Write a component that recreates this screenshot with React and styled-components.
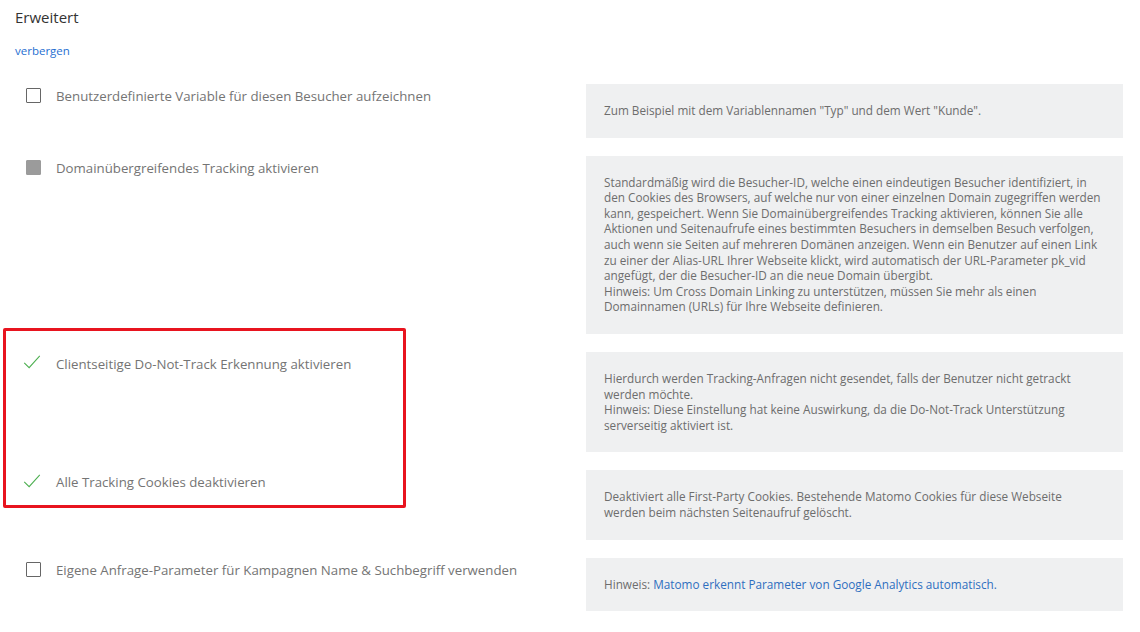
import React from "react";
import styled, { createGlobalStyle } from "styled-components";

const Global = createGlobalStyle`
  html, body { margin: 0; padding: 0; background: #fff; }
  body { font-family: "Open Sans", "Noto Sans", sans-serif; }
`;

const Page = styled.div`
  padding: 7px 17px 0 15px;
`;

const Title = styled.h3`
  margin: 0;
  font-size: 15px;
  line-height: 20px;
  font-weight: 400;
  color: #333;
`;

const ToggleLink = styled.a`
  display: inline-block;
  margin-top: 17px;
  font-size: 11.5px;
  line-height: 14px;
  color: #1f6fd1;
  text-decoration: none;
`;

const List = styled.div`
  margin-top: 24px;
`;

const Row = styled.div`
  display: grid;
  grid-template-columns: 1fr 537px;
  column-gap: 16px;
  margin-bottom: 18px;
`;

const Field = styled.label`
  display: flex;
  align-items: flex-start;
  gap: 15px;
  padding: 4px 0 0 11px;
`;

const Control = styled.span`
  flex: none;
  width: 15px;
  height: 15px;
  display: flex;
  align-items: center;
  justify-content: center;
`;

const Box = styled.span`
  box-sizing: border-box;
  width: 15px;
  height: 15px;
  border-radius: 1px;
  border: 1.5px solid ${(p) => (p.$filled ? "#9b9b9b" : "#666")};
  background: ${(p) => (p.$filled ? "#9b9b9b" : "#fff")};
`;

const LabelText = styled.span`
  font-size: 13.25px;
  line-height: 16px;
  color: #747474;
`;

const Help = styled.div`
  background: #eff0f1;
  padding: 19px 18px;
  font-size: 11.75px;
  line-height: 15.6px;
  color: #6d6d6d;
`;

const HelpLink = styled.a`
  color: #2f6fbf;
  text-decoration: none;
`;

const Highlight = styled.div`
  position: relative;
`;

const RedFrame = styled.div`
  position: absolute;
  left: -12px;
  top: -24px;
  width: 403px;
  height: 180px;
  box-sizing: border-box;
  border: 3.5px solid #e8141f;
  border-radius: 2px;
  pointer-events: none;
`;

const Check = () => (
  <svg width="22" height="18" viewBox="0 0 22 18" style={{ marginLeft: -3, marginTop: -2 }}>
    <path d="M1.5 10 L7.5 16 L20.5 1.5" fill="none" stroke="#4caf50" strokeWidth="1.3" />
  </svg>
);

function Option({ kind, label, children }) {
  return (
    <Row>
      <Field>
        <Control>
          {kind === "check" ? <Check /> : <Box $filled={kind === "filled"} />}
        </Control>
        <LabelText>{label}</LabelText>
      </Field>
      <Help>{children}</Help>
    </Row>
  );
}

export default function App() {
  return (
    <>
      <Global />
      <Page>
        <Title>Erweitert</Title>
        <ToggleLink href="#">verbergen</ToggleLink>
        <List>
          <Option kind="box" label="Benutzerdefinierte Variable für diesen Besucher aufzeichnen">
            Zum Beispiel mit dem Variablennamen "Typ" und dem Wert "Kunde".
          </Option>
          <Option kind="filled" label="Domainübergreifendes Tracking aktivieren">
            Standardmäßig wird die Besucher-ID, welche einen eindeutigen Besucher identifiziert, in den Cookies des Browsers, auf welche nur von einer einzelnen Domain zugegriffen werden kann, gespeichert. Wenn Sie Domainübergreifendes Tracking aktivieren, können Sie alle Aktionen und Seitenaufrufe eines bestimmten Besuchers in demselben Besuch verfolgen, auch wenn sie Seiten auf mehreren Domänen anzeigen. Wenn ein Benutzer auf einen Link zu einer der Alias-URL Ihrer Webseite klickt, wird automatisch der URL-Parameter pk_vid angefügt, der die Besucher-ID an die neue Domain übergibt.
            <br />
            Hinweis: Um Cross Domain Linking zu unterstützen, müssen Sie mehr als einen Domainnamen (URLs) für Ihre Webseite definieren.
          </Option>
          <Highlight>
            <Option kind="check" label="Clientseitige Do-Not-Track Erkennung aktivieren">
              Hierdurch werden Tracking-Anfragen nicht gesendet, falls der Benutzer nicht getrackt werden möchte.
              <br />
              Hinweis: Diese Einstellung hat keine Auswirkung, da die Do-Not-Track Unterstützung serverseitig aktiviert ist.
            </Option>
            <Option kind="check" label="Alle Tracking Cookies deaktivieren">
              Deaktiviert alle First-Party Cookies. Bestehende Matomo Cookies für diese Webseite werden beim nächsten Seitenaufruf gelöscht.
            </Option>
            <RedFrame />
          </Highlight>
          <Option kind="box" label="Eigene Anfrage-Parameter für Kampagnen Name & Suchbegriff verwenden">
            Hinweis: <HelpLink href="#">Matomo erkennt Parameter von Google Analytics automatisch.</HelpLink>
          </Option>
        </List>
      </Page>
    </>
  );
}
